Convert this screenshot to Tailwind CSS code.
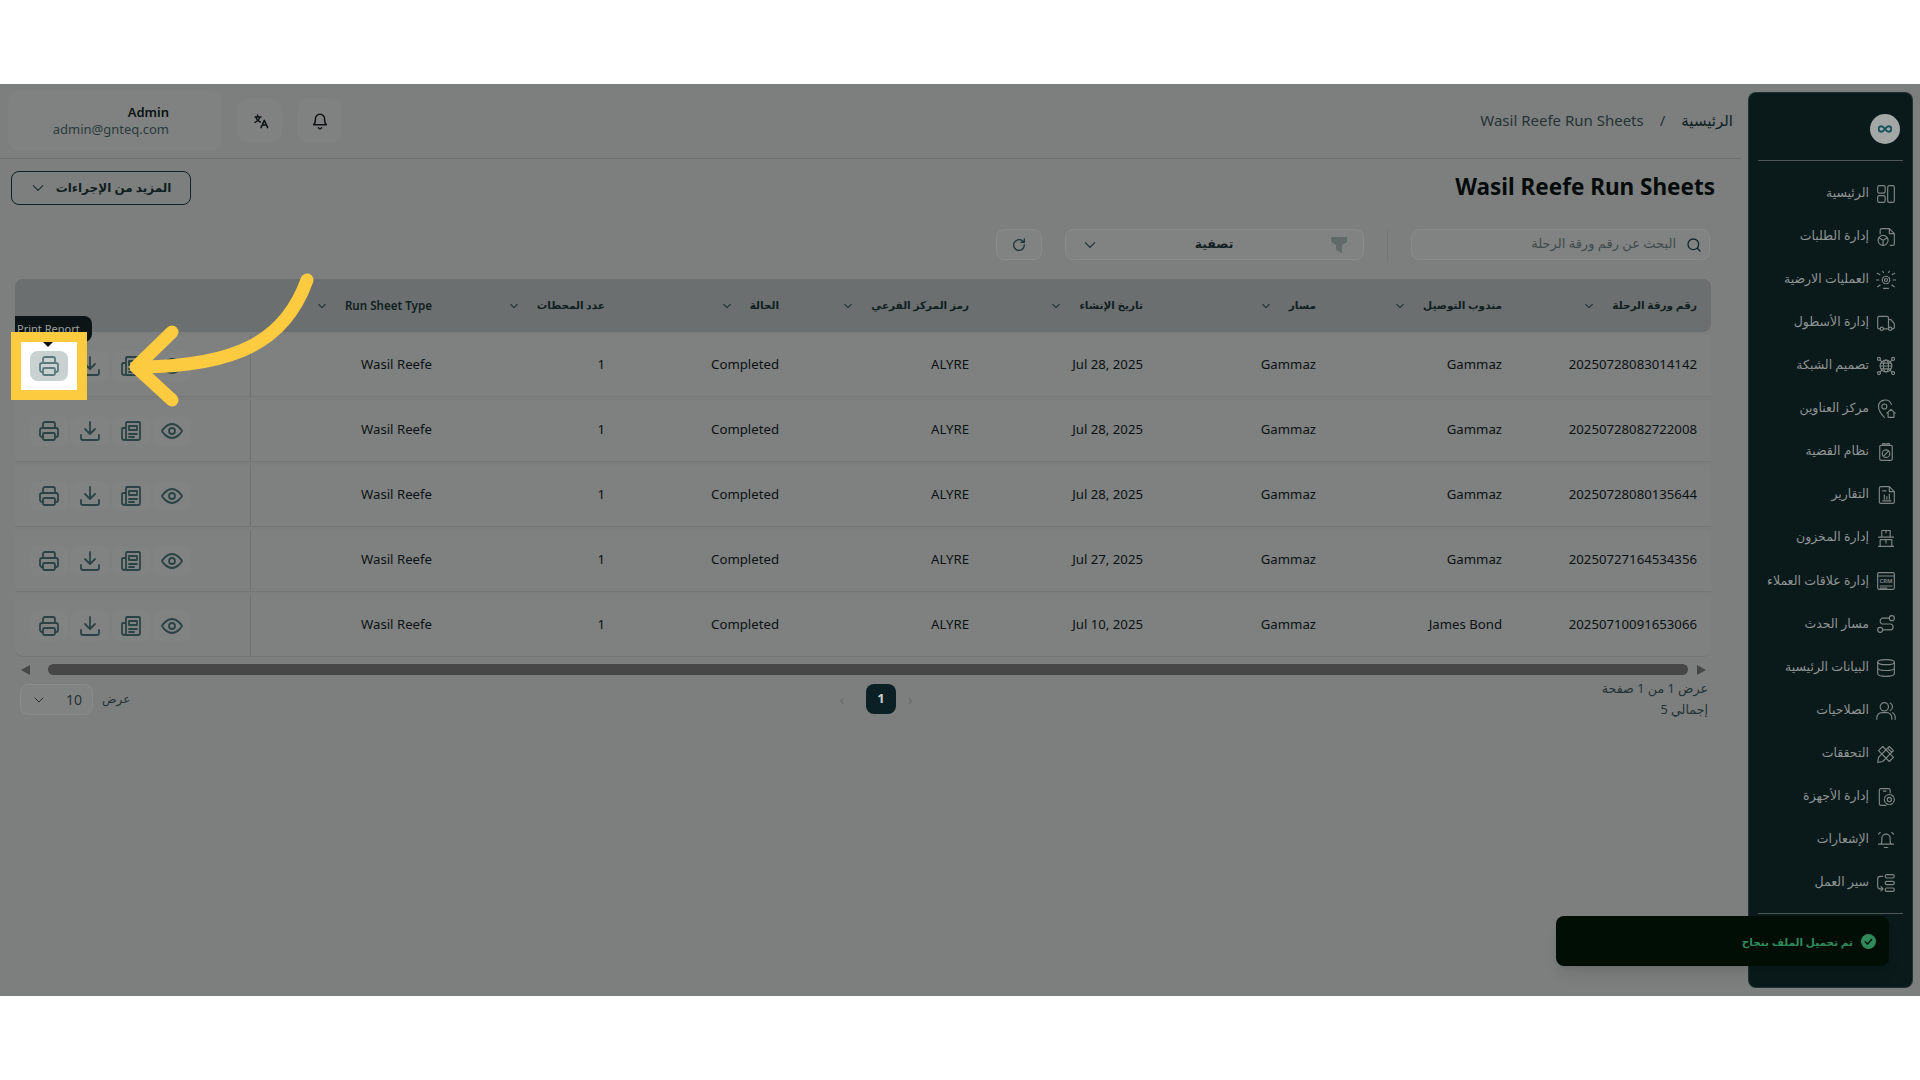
<!DOCTYPE html>
<html lang="ar">
<head>
    <meta charset="UTF-8">
    <title>Wasil Reefe Run Sheets</title>
    <script src="https://cdn.jsdelivr.net/npm/@tailwindcss/browser@4"></script>
</head>
<body class="bg-white font-['Noto_Sans','DejaVu_Sans',sans-serif] text-[#0b1213] overflow-hidden">
    <div class="h-[84px]"></div>

    <main dir="rtl" class="relative h-[912px] bg-[#7d7f7e] flex overflow-hidden">
        <!-- sidebar -->
        <aside class="w-[165px] h-[896px] mt-2 mr-[7px] ml-[7px] shrink-0 bg-[#0a1a1b] rounded-lg border border-[#4a5453]/40 flex flex-col">
            <div class="h-[68px] border-b border-[#4d5756] mx-[9px] flex items-center pr-[3px] pt-1">
                <div class="w-[30px] h-[30px] rounded-full bg-[#a3a8a7] flex items-center justify-center">
                    <svg width="14" height="8" viewBox="0 0 18 10" fill="none" stroke="#17545b" stroke-width="2.600"><path d="M9 5c-1.500-2-3-3.500-4.700-3.500a3.500 3.500 0 0 0 0 7C6 8.500 7.500 7 9 5c1.500-2 3-3.500 4.700-3.500a3.500 3.500 0 0 1 0 7C12 8.500 10.500 7 9 5z"/></svg>
                </div>
            </div>
            <nav id="nav" class="pt-[11px]"></nav>
            <div class="border-b border-[#4d5756] mx-[9px] mt-[8px]"></div>
        </aside>

        <!-- content -->
        <div class="flex-1 min-w-0">
            <header class="h-[75px] border-b border-[#6d706f] flex items-center justify-between">
                <nav class="flex items-center gap-4 mr-2 text-[15px] text-[#263335] pb-[2px]">
                    <span class="text-[#0f2023] font-medium">الرئيسية</span>
                    <span>/</span>
                    <span>Wasil Reefe Run Sheets</span>
                </nav>
                <div dir="ltr" class="flex items-center gap-[15px] ml-2 pb-[1px]">
                    <div class="w-[214px] h-[60px] rounded-xl bg-[#808281] pr-[53px] flex flex-col justify-center items-end text-[13px] leading-[17px]">
                        <span class="font-semibold text-[#0b1213]">Admin</span>
                        <span class="text-[#2b3a3c]">admin@gnteq.com</span>
                    </div>
                    <div class="w-[45px] h-[44px] rounded-xl bg-[#808281] flex items-center justify-center pl-[3px]">
                        <svg width="16" height="16" viewBox="0 0 24 24" fill="none" stroke="#0b1213" stroke-width="2.200" stroke-linecap="round" stroke-linejoin="round"><path d="M3 6h9M7 3v3M10 6c-.6 3.500-3 6-7 8M5 8c1 2.500 3 4.500 6 5.500M12 22l5-11 5 11M14 18h6"/></svg>
                    </div>
                    <div class="w-[45px] h-[44px] rounded-xl bg-[#808281] flex items-center justify-center">
                        <svg width="18" height="18" viewBox="0 0 24 24" fill="none" stroke="#0b1213" stroke-width="2" stroke-linecap="round" stroke-linejoin="round"><path d="M6 9a6 6 0 0 1 12 0c0 6 2.500 8 2.500 8h-17S6 15 6 9M10 21a2.200 2.200 0 0 0 4 0"/></svg>
                    </div>
                </div>
            </header>

            <div class="flex items-center justify-between h-[34px] mt-3 mr-[26px] ml-[11px]">
                <h1 class="text-[22.500px] font-bold text-[#050a0b] leading-none pb-[2px]">Wasil Reefe Run Sheets</h1>
                <button class="w-[180px] h-[34px] border border-[#0f2326] rounded-lg flex items-center justify-center gap-[11px] text-[12px] font-semibold text-[#10201f]">
                    <span>المزيد من الإجراءات</span>
                    <svg width="14" height="14" viewBox="0 0 24 24" fill="none" stroke="#1d2e30" stroke-width="2" stroke-linecap="round" stroke-linejoin="round"><path d="M4 8l8 8 8-8"/></svg>
                </button>
            </div>

            <div class="flex items-center h-[31px] mt-6 mr-[31px]">
                <div class="w-[299px] h-[31px] rounded-lg bg-[#818382] border border-[#8a8c8b] flex items-center px-[7px] gap-[10px] text-[13px] text-[#3f4b4c]">
                    <svg width="16" height="16" viewBox="0 0 24 24" fill="none" stroke="#14282b" stroke-width="2" stroke-linecap="round"><circle cx="11" cy="11" r="8"/><path d="M17 17l4 4"/></svg>
                    <span class="pb-[2px]">البحث عن رقم ورقة الرحلة</span>
                </div>
                <div class="w-px h-[32px] bg-[#747675] mx-[23px]"></div>
                <div class="w-[299px] h-[31px] rounded-lg bg-[#818382] border border-[#8a8c8b] flex items-center justify-between pr-[16px] pl-[17px] text-[12.500px] font-semibold text-[#10201f]">
                    <svg width="16" height="16" viewBox="0 0 16 16" fill="#626a69"><path d="M0 0h16v5l-5 3v8l-6-3V8L0 5z"/></svg>
                    <span>تصفية</span>
                    <svg width="14" height="14" viewBox="0 0 24 24" fill="none" stroke="#1d2e30" stroke-width="2" stroke-linecap="round" stroke-linejoin="round"><path d="M4 8l8 8 8-8"/></svg>
                </div>
                <div class="w-[46px] h-[31px] mr-[23px] rounded-lg bg-[#818382] border border-[#8a8c8b] flex items-center justify-center">
                    <svg width="16" height="16" viewBox="0 0 24 24" fill="none" stroke="#1d3538" stroke-width="2" stroke-linecap="round" stroke-linejoin="round"><path d="M20 12a8 8 0 1 1-3-6.200L20 8M20 3v5h-5"/></svg>
                </div>
            </div>

            <!-- table -->
            <section class="w-[1696px] mt-[19px] mr-[30px]">
                <div class="grid grid-cols-[195px_186px_173px_174px_190px_174px_173px_195px_236px] h-[53px] mb-[3px] bg-[#6b6f6f] rounded-lg font-semibold text-[#10201f]" id="thead"></div>
                <div id="tbody" class="flex flex-col gap-[3px]"></div>
            </section>

            <!-- scrollbar -->
            <div dir="ltr" class="flex items-center h-[11px] w-[1696px] mt-[7px] mr-[30px]">
                <div class="w-0 h-0 ml-[6px] border-y-[5px] border-y-transparent border-r-[9px] border-r-[#474747]"></div>
                <div class="w-[1640px] h-[11px] ml-[18px] rounded-full bg-[#474747]"></div>
                <div class="w-0 h-0 ml-[9px] border-y-[5px] border-y-transparent border-l-[9px] border-l-[#474747]"></div>
            </div>

            <!-- pager -->
            <div class="grid grid-cols-[1fr_60px_1fr] items-start w-[1696px] mt-[9px] mr-[30px] text-[#243335]">
                <div class="text-[12.700px] leading-[21px] pr-[3px] -mt-[6px]">
                    <p>عرض 1 من 1 صفحة</p>
                    <p>إجمالي 5</p>
                </div>
                <div dir="ltr" class="flex items-center justify-center relative left-[13px]">
                    <span class="text-[#666a6a] text-[14px] mr-[22px]">‹</span>
                    <span class="shrink-0 w-[30px] h-[30px] rounded-lg bg-[#0a2024] text-[#c9d0d0] text-[13px] font-bold flex items-center justify-center">1</span>
                    <span class="text-[#666a6a] text-[14px] ml-[12px]">›</span>
                </div>
                <div class="flex items-center justify-end gap-[9px]">
                    <span class="text-[12px] pb-[1px]">عرض</span>
                    <div dir="ltr" class="ml-[5px] w-[73px] h-[31px] rounded-lg bg-[#818382] border border-[#8a8c8b] flex items-center justify-between pl-[12px] pr-[10px] text-[14px]">
                        <svg width="12" height="12" viewBox="0 0 24 24" fill="none" stroke="#1d2e30" stroke-width="2" stroke-linecap="round" stroke-linejoin="round"><path d="M4 8l8 8 8-8"/></svg>
                        <span>10</span>
                    </div>
                </div>
            </div>
        </div>

        <!-- tooltip and highlight lie over the table -->
        <div dir="ltr" class="absolute left-[15px] top-[232px] w-[77px] h-[26px] bg-[#0d1415] rounded-r-lg text-[11px] text-[#9aa0a0] pl-[2px] pt-[6px] leading-[14px]">Print Report</div>
        <div class="absolute left-[11px] top-[248px] w-[76px] h-[68px] border-[10px] border-[#fdcb3f] bg-white"></div>
        <div class="absolute left-[43px] top-[258px] w-0 h-0 border-x-[5px] border-x-transparent border-t-[5px] border-t-[#111]"></div>
        <div class="absolute left-[30px] top-[267px] w-[38px] h-[30px] rounded-lg bg-[#c9d1d1] flex items-center justify-center">
            <svg width="24" height="24" viewBox="0 0 24 24" fill="none" stroke="#5c7a7e" stroke-width="1.800" stroke-linecap="round" stroke-linejoin="round"><path d="M6 9V5a2 2 0 0 1 2-2h8a2 2 0 0 1 2 2v4M6 18H5a2 2 0 0 1-2-2v-5a2 2 0 0 1 2-2h14a2 2 0 0 1 2 2v5a2 2 0 0 1-2 2h-1"/><rect x="6" y="14" width="12" height="7" rx="1.500"/></svg>
        </div>
        <svg class="absolute left-0 top-0 pointer-events-none" width="340" height="340" viewBox="0 0 340 340" fill="none" stroke="#fdcb3f" stroke-width="13" stroke-linecap="round" stroke-linejoin="round">
            <path d="M307 196C285 258 235 282 141 283"/>
            <path d="M172 248L136 283L172 316"/>
        </svg>

        <!-- toast -->
        <div class="absolute left-[1556px] top-[832px] w-[333px] h-[50px] rounded-lg bg-[#010e06] shadow-lg flex items-center pr-[13px] gap-[8px] text-[10.500px] font-semibold text-[#2f8a5a]">
            <svg width="15" height="15" viewBox="0 0 16 16"><circle cx="8" cy="8" r="8" fill="#2f8a5a"/><path d="M4.500 8.200l2.400 2.400 4.400-4.800" fill="none" stroke="#01120a" stroke-width="1.600" stroke-linecap="round" stroke-linejoin="round"/></svg>
            <span class="pt-[3px]">تم تحميل الملف بنجاح</span>
        </div>
    </main>

    <div class="h-[84px]"></div>

    <script>
        const navItems = [
            ['الرئيسية', '<rect x="2" y="2" width="9" height="9" rx="2"/><rect x="2" y="14" width="9" height="8" rx="2"/><rect x="14" y="2" width="8" height="20" rx="2"/>'],
            ['إدارة الطلبات', '<path d="M5 8V4a2 2 0 0 1 2-2h9l6 6v12a2 2 0 0 1-2 2h-3M16 2v6h6"/><circle cx="8.500" cy="16" r="6"/><path d="M8.500 16v6M8.500 16l-5-3M8.500 16l5-3"/>'],
            ['العمليات الارضية', '<circle cx="12" cy="12" r="1.800"/><circle cx="12" cy="12" r="4.500" stroke-dasharray="2.500 1.500"/><path d="M0 12h3.500M20.500 12H24M1.500 4l3 1.500M22.500 4l-3 1.500M2 20l3-2M22 20l-3-2M8 1.500l1 1.500M16 1.500l-1 1.500M9 22h6"/>'],
            ['إدارة الأسطول', '<path d="M5 19H4a2 2 0 0 1-2-2V6a2 2 0 0 1 2-2h9a2 2 0 0 1 2 2v13H9M15 8h3l4 5v4a2 2 0 0 1-2 2h-1M15 19h0"/><circle cx="7" cy="19" r="2"/><circle cx="17" cy="19" r="2"/>'],
            ['تصميم الشبكة', '<circle cx="12" cy="12" r="7"/><ellipse cx="12" cy="12" rx="3" ry="7"/><path d="M5 12h14M6 8.500h12M6 15.500h12"/><circle cx="3.500" cy="3.500" r="1.800"/><circle cx="20.500" cy="3.500" r="1.800"/><circle cx="3.500" cy="20.500" r="1.800"/><circle cx="20.500" cy="20.500" r="1.800"/><path d="M5 5l2 2M19 5l-2 2M5 19l2-2M19 19l-2-2"/>'],
            ['مركز العناوين', '<path d="M10 22S3 15 3 9a8 8 0 0 1 15.500-2.500"/><circle cx="10" cy="9" r="3"/><path d="M13 17l5-4.500 5 4.500M14.500 16v6h7v-6"/>'],
            ['نظام القضية', '<path d="M6 4h12a1.500 1.500 0 0 1 1.500 1.500v15A1.500 1.500 0 0 1 18 22H6a1.500 1.500 0 0 1-1.500-1.500v-15A1.500 1.500 0 0 1 6 4zM8 4V2h3v2M13 4V2h3v2"/><circle cx="12" cy="14" r="4.500"/><path d="M9 17l6-6"/>'],
            ['التقارير', '<path d="M6 2h10l6 6v12a2 2 0 0 1-2 2H6a2 2 0 0 1-2-2V4a2 2 0 0 1 2-2zM16 2v6h6M8 7h4M8 19h10M10 17v-5M13 17v-3M16 17v-6"/>'],
            ['إدارة المخزون', '<path d="M7 10V3h10v7M12 3v3M3 11h18M5 22V14h14v8M12 14v4M3 22h18"/>'],
            ['إدارة علاقات العملاء', '<rect x="2" y="2" width="20" height="20" rx="1.500"/><path d="M2 6h20M5 18h14M5 20.500h8"/><text x="12" y="14.500" font-size="7" font-weight="700" fill="#7e8584" stroke="none" text-anchor="middle">CRM</text>'],
            ['مسار الحدث', '<circle cx="19" cy="5" r="3"/><circle cx="5" cy="19" r="3"/><path d="M16 5H7a4 4 0 0 0 0 7h10a3.500 3.500 0 0 1 0 7H8"/>'],
            ['البيانات الرئيسية', '<ellipse cx="12" cy="5" rx="10" ry="3"/><path d="M2 5v14c0 1.700 4.500 3 10 3s10-1.300 10-3V5M2 12c0 1.700 4.500 3 10 3s10-1.300 10-3"/>'],
            ['الصلاحيات', '<circle cx="10" cy="7" r="5"/><path d="M1 22v-2a6 6 0 0 1 6-6h6a6 6 0 0 1 6 6v2M17 2.500a5 5 0 0 1 0 9M20 14a6 6 0 0 1 3 5v3"/>'],
            ['التحققات', '<path d="M3 16L16 3l5 5L8 21l-6 1zM14 5l5 5"/><path d="M8 3L3 8l13 13 5-5z"/>'],
            ['إدارة الأجهزة', '<path d="M12 22H6a2 2 0 0 1-2-2V4a2 2 0 0 1 2-2h9a2 2 0 0 1 2 2v3M9 5h3"/><circle cx="16" cy="15" r="2.500"/><circle cx="16" cy="15" r="6" stroke-dasharray="3.500 1.500"/>'],
            ['الإشعارات', '<path d="M6 17c1.500-2 1-4 1-7a5 5 0 0 1 10 0c0 3-.5 5 1 7H6zM3 17h18M10 21h4M3 5l2-2M21 5l-2-2"/>'],
            ['سير العمل', '<rect x="11" y="2" width="11" height="4" rx="2"/><rect x="11" y="10" width="11" height="4" rx="2"/><rect x="11" y="18" width="11" height="4" rx="2"/><path d="M8 4H5a3 3 0 0 0-3 3v9a3 3 0 0 0 3 3h3M6 16.500L8.500 19 6 21.500"/>'],
        ];
        document.getElementById('nav').innerHTML = navItems.map(([label, icon]) => `
            <div class="h-[43.1px] flex items-center gap-[7px] pr-[16px] text-[12.500px] text-[#8f9494]">
                <svg class="shrink-0" width="20" height="20" viewBox="0 0 24 24" fill="none" stroke="#7e8584" stroke-width="1.400" stroke-linecap="round" stroke-linejoin="round">${icon}</svg>
                <span class="whitespace-nowrap pb-[1px]">${label}</span>
            </div>`).join('');

        const chevron = '<svg width="10" height="10" viewBox="0 0 24 24" fill="none" stroke="#1d2e30" stroke-width="2.500" stroke-linecap="round" stroke-linejoin="round"><path d="M4 8l8 8 8-8"/></svg>';
        const headers = ['رقم ورقة الرحلة', 'مندوب التوصيل', 'مسار', 'تاريخ الإنشاء', 'رمز المركز الفرعي', 'الحالة', 'عدد المحطات'];
        const headerCell = (h, size) => `
            <div class="flex items-center gap-[18px] pr-[14px] whitespace-nowrap ${size}"><span>${h}</span>${chevron}</div>`;
        document.getElementById('thead').innerHTML = headers.map(h => headerCell(h, 'text-[10.500px]')).join('') + headerCell('Run Sheet Type', 'text-[11.600px]') + '<div></div>';

        const rows = [
            ['20250728083014142', 'Gammaz', 'Jul 28, 2025'],
            ['20250728082722008', 'Gammaz', 'Jul 28, 2025'],
            ['20250728080135644', 'Gammaz', 'Jul 28, 2025'],
            ['20250727164534356', 'Gammaz', 'Jul 27, 2025'],
            ['20250710091653066', 'James Bond', 'Jul 10, 2025'],
        ];
        const actionIcons = [
            '<path d="M6 9V5a2 2 0 0 1 2-2h8a2 2 0 0 1 2 2v4M6 18H5a2 2 0 0 1-2-2v-5a2 2 0 0 1 2-2h14a2 2 0 0 1 2 2v5a2 2 0 0 1-2 2h-1"/><rect x="6" y="14" width="12" height="7" rx="1.500"/>',
            '<path d="M12 3v12M7 10l5 5 5-5M3 16v3a2 2 0 0 0 2 2h14a2 2 0 0 0 2-2v-3"/>',
            '<path d="M7 21h12a2 2 0 0 0 2-2V4a1 1 0 0 0-1-1H8a1 1 0 0 0-1 1v15a2 2 0 0 1-4 0v-9a1 1 0 0 1 1-1h3M10 7h8v4h-8zM10 15h8M10 18h5"/>',
            '<path d="M2 12s4-7 10-7 10 7 10 7-4 7-10 7-10-7-10-7z"/><circle cx="12" cy="12" r="3"/>',
        ];
        const actions = actionIcons.map(icon => `
            <span class="w-[38px] h-[30px] rounded-lg bg-[#808382] flex items-center justify-center">
                <svg width="24" height="24" viewBox="0 0 24 24" fill="none" stroke="#2c4345" stroke-width="1.800" stroke-linecap="round" stroke-linejoin="round">${icon}</svg>
            </span>`).join('');
        const cell = text => `<div class="flex items-center pr-[14px] pb-[2px] whitespace-nowrap">${text}</div>`;
        document.getElementById('tbody').innerHTML = rows.map(([id, agent, date], i) => `
            <div class="grid grid-cols-[195px_186px_173px_174px_190px_174px_173px_195px_236px] h-[62px] bg-[#7f8080] border-b border-[#757776] text-[13.200px] ${i === rows.length - 1 ? 'rounded-b-lg' : ''}">
                ${[id, agent, 'Gammaz', date, 'ALYRE', 'Completed', '1', 'Wasil Reefe'].map(cell).join('')}
                <div dir="ltr" class="border-r border-[#6f7170] flex items-center gap-[3px] pl-[15px]">${actions}</div>
            </div>`).join('');
    </script>
</body>
</html>
